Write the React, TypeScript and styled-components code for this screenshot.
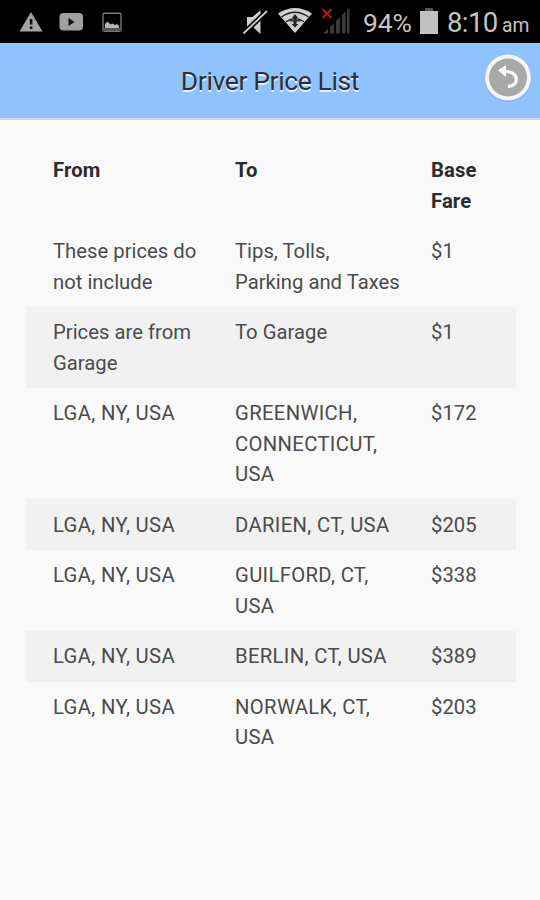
import React from "react";
import styled, { createGlobalStyle } from "styled-components";

const GlobalStyle = createGlobalStyle`
  * { box-sizing: border-box; }
  body { margin: 0; background: #f9f9f9; font-family: Roboto, sans-serif; }
`;

const Screen = styled.div`
  width: 540px;
  height: 900px;
  overflow: hidden;
  display: flex;
  flex-direction: column;
  background: #f9f9f9;
`;

const StatusBar = styled.div`
  height: 43px;
  flex: none;
  background: #000;
  display: flex;
  justify-content: space-between;
  padding: 0 10px 0 0;
  color: #c4c4c4;
`;

const StatusGroup = styled.div`
  display: flex;
  align-items: flex-start;
`;

const Percent = styled.span`
  font-size: 26.5px;
  letter-spacing: -0.2px;
  width: 53px;
  line-height: 46px;
`;

const Clock = styled.span`
  font-size: 27.5px;
  line-height: 46px;
  letter-spacing: -0.6px;
  width: 55px;
  margin-left: 3px;
`;

const Meridiem = styled.span`
  font-size: 19.3px;
  line-height: 51px;
  width: 28px;
`;

const Header = styled.header`
  height: 77px;
  flex: none;
  display: grid;
  grid-template-columns: 60px 1fr 60px;
  align-items: center;
  background: #90c3fe;
  border-bottom: 2px solid #d3d9df;
`;

const Title = styled.h1`
  grid-column: 2;
  margin: 0;
  text-align: center;
  font-size: 26.5px;
  font-weight: 400;
  line-height: 36px;
  letter-spacing: -0.38px;
  color: #2b3037;
  text-shadow: 0 1.5px 0 #e8f0f8;
`;

const BackButton = styled.button`
  width: 48px;
  height: 48px;
  margin: 0 0 0 4px;
  padding: 0;
  border: 0;
  background: none;
  transform: translateY(-3px);
`;

const PriceTable = styled.table`
  width: 490px;
  margin: 25px 0 0 26px;
  border-collapse: collapse;
  table-layout: fixed;
  font-size: 20.26px;
  line-height: 30.4px;
  color: #4b4b4b;
`;

const Column = styled.col<{ $width: number }>`
  width: ${(p) => p.$width}px;
`;

const HeadCell = styled.th`
  padding: 10.1px 10px 10.1px 27px;
  text-align: left;
  vertical-align: top;
  font-weight: 700;
  letter-spacing: 0.1px;
  color: #2c2c2c;
`;

const Row = styled.tr<{ $shaded: boolean }>`
  background: ${(p) => (p.$shaded ? "#f1f1f1" : "transparent")};
`;

const Cell = styled.td<{ $caps?: boolean }>`
  padding: 10.1px 0 10.1px 27px;
  vertical-align: top;
  white-space: pre-line;
  letter-spacing: ${(p) => (p.$caps ? "0.34px" : "0.01px")};
`;

const prices = [
  ["These prices do not include", "Tips, Tolls,\nParking and Taxes", "$1"],
  ["Prices are from Garage", "To Garage", "$1"],
  ["LGA, NY, USA", "GREENWICH, CONNECTICUT, USA", "$172"],
  ["LGA, NY, USA", "DARIEN, CT, USA", "$205"],
  ["LGA, NY, USA", "GUILFORD, CT, USA", "$338"],
  ["LGA, NY, USA", "BERLIN, CT, USA", "$389"],
  ["LGA, NY, USA", "NORWALK, CT, USA", "$203"],
];

const isCaps = (text: string) => text === text.toUpperCase();

const NotificationIcons = () => (
  <svg width="130" height="43" viewBox="0 0 130 43">
    <path d="M31 12 42.5 31.500H19.500Z" fill="#a3a3a3" />
    <path d="M29.800 19h2.600v5.500h-2.600zM29.800 26.500h2.600v2.500h-2.600z" fill="#111" />
    <rect x="59.500" y="13" width="23.500" height="17.500" rx="4" fill="#a0a0a0" />
    <path d="M68.500 18v8l6-4Z" fill="#111" />
    <rect x="103" y="13.200" width="18" height="18" rx="1.500" fill="none" stroke="#777" strokeWidth="1.400" />
    <path d="M105 28v-4l2.500-2.500 3 3 2-1 2.500 1.500 2-1 2 2v2Z" fill="#b5b5b5" />
    <path d="M103 28h18v3h-18z" fill="#555" />
  </svg>
);

const ConnectionIcons = () => (
  <svg width="123" height="43" viewBox="240 0 123 43">
    <path d="M247 17h5.500l8-7V34l-8-7.500H247Z" fill="#ccc" />
    <path d="M243.500 33.500 267 11" stroke="#000" strokeWidth="5" />
    <path d="M243.500 33.500 267 11" stroke="#ccc" strokeWidth="1.800" />
    <path d="M278 13.500Q295 2.500 312 13.500L295 33Z" fill="#d0d0d0" />
    <path d="M281.500 17Q295 7.500 308.500 17M286 21.800Q295 15.500 304 21.800" fill="none" stroke="#202020" strokeWidth="1.300" />
    <path d="m295 14 3 4h-1.500v6h2L295 27.500l-3.500-3.500h2v-6H292Z" fill="#222" />
    <path d="M289.500 20.800h11" stroke="#333" strokeWidth="1.500" />
    <path d="M323 33.500l5-5v5zM330 27l4-4v10.500h-4zM336 21l4-4v16.500h-4zM342 15l3.500-3.500v22H342zM347 10l2.500-2v25.500H347z" fill="#393939" />
    <path d="m322.500 9 9 9m0-9-9 9" stroke="#b51920" strokeWidth="2" />
  </svg>
);

const BatteryIcon = () => (
  <svg width="28" height="43" viewBox="416 0 28 43">
    <path d="M425 8h8v3h-8Z" fill="#555" />
    <path d="M420 11h18v23h-18Z" fill="#c2c2c2" />
  </svg>
);

const BackIcon = () => (
  <svg width="48" height="48" viewBox="0 0 48 48">
    <circle cx="24" cy="24.300" r="23.600" fill="#7898ba" opacity=".45" />
    <circle cx="24" cy="23.500" r="23" fill="#f5f5f5" />
    <circle cx="24" cy="23.500" r="19" fill="#a8a8a8" />
    <path d="M19 17.300C27.500 17 32.300 20.500 32.300 25.500C32.300 29.500 29 32 24 32.500" fill="none" stroke="#fafafa" strokeWidth="3.300" />
    <path d="m14 16.300 8-5.300v12Z" fill="#fafafa" />
  </svg>
);

export default function App() {
  return (
    <Screen>
      <GlobalStyle />
      <StatusBar>
        <NotificationIcons />
        <StatusGroup>
          <ConnectionIcons />
          <Percent>94%</Percent>
          <BatteryIcon />
          <Clock>8:10</Clock>
          <Meridiem>am</Meridiem>
        </StatusGroup>
      </StatusBar>
      <Header>
        <Title>Driver Price List</Title>
        <BackButton aria-label="Back">
          <BackIcon />
        </BackButton>
      </Header>
      <PriceTable>
        <colgroup>
          <Column $width={182} />
          <Column $width={196} />
          <Column $width={112} />
        </colgroup>
        <thead>
          <tr>
            <HeadCell>From</HeadCell>
            <HeadCell>To</HeadCell>
            <HeadCell>Base<br />Fare</HeadCell>
          </tr>
        </thead>
        <tbody>
          {prices.map(([from, to, fare], index) => (
            <Row key={index} $shaded={index % 2 === 1}>
              <Cell $caps={isCaps(from)}>{from}</Cell>
              <Cell $caps={isCaps(to)}>{to}</Cell>
              <Cell>{fare}</Cell>
            </Row>
          ))}
        </tbody>
      </PriceTable>
    </Screen>
  );
}
